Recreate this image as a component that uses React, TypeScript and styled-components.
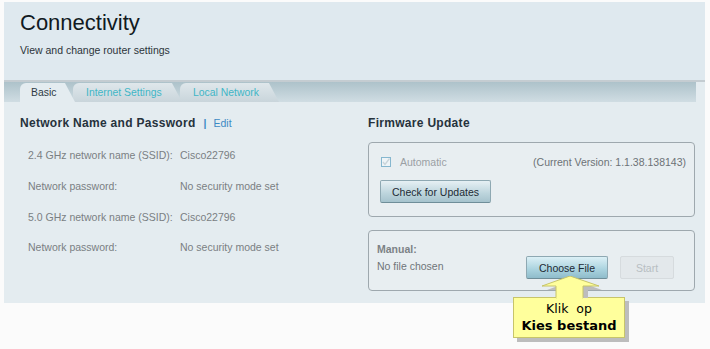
import styled, { createGlobalStyle } from "styled-components";

const GlobalStyle = createGlobalStyle`
    html, body {
        margin: 0;
        padding: 0;
        background-color: #fbfbfb;
        font-family: "Liberation Sans", Arial, sans-serif;
    }
`

const Page = styled.div`
    position: relative;
    width: 710px;
    height: 349px;
    padding: 2px 5px 0 4px;
    box-sizing: border-box;
`

const Panel = styled.div`
    width: 701px;
    background-color: #e4ecf0;
`

const Header = styled.header`
    height: 80px;
    padding: 8px 16px 0;
    box-sizing: border-box;
    background-color: #dfe9ef;
    border-bottom: 2px solid #c4ccd1;
`

const Title = styled.h1`
    margin: 0;
    font-size: 22px;
    font-weight: normal;
    line-height: 26px;
    color: #111a22;
`

const Subtitle = styled.p`
    margin: 8px 0 0;
    font-size: 10.5px;
    color: #2c343a;
`

const TabBar = styled.nav`
    display: flex;
    align-items: flex-end;
    height: 20px;
    padding-left: 16px;
    margin-right: 9px;
    background: linear-gradient(#adc2ca, #d0dde3);
`

const Tab = styled.div<{ $active?: boolean; $w: number }>`
    width: ${p => p.$w}px;
    height: 19px;
    margin-right: -2px;
    padding-left: ${p => (p.$active ? 11 : 13)}px;
    box-sizing: border-box;
    display: flex;
    align-items: center;
    font-size: 10.4px;
    color: ${p => (p.$active ? "#2e3a44" : "#3fb6c6")};
    background: ${p => (p.$active ? "#e4ecf0" : "linear-gradient(#dfe7eb, #c9d5db)")};
    border-top-left-radius: 6px;
    clip-path: polygon(0 0, calc(100% - 10px) 0, 100% 100%, 0 100%);
    position: relative;
    z-index: ${p => (p.$active ? 2 : 1)};
`

const Content = styled.section`
    display: grid;
    grid-template-columns: 348px 327px;
    padding: 14px 0 0 16px;
    height: 201px;
    box-sizing: border-box;
`

const SectionTitle = styled.h2`
    margin: 0;
    font-size: 12px;
    letter-spacing: 0.3px;
    font-weight: bold;
    color: #26323c;
    line-height: 14px;
`

const EditLink = styled.span`
    font-weight: normal;
    font-size: 10.5px;
    letter-spacing: 0;
    color: #3d8ac4;
    margin-left: 8px;

    & b {
        font-weight: bold;
        margin-right: 7px;
    }
`

const InfoList = styled.div`
    display: grid;
    grid-template-columns: 152px 1fr;
    grid-auto-rows: 30.7px;
    align-items: center;
    padding: 10px 0 0 8px;
    font-size: 10.5px;
    color: #7a7f83;
`

const Box = styled.div<{ $h: number }>`
    height: ${p => p.$h}px;
    margin-top: ${p => (p.$h > 70 ? 12 : 13)}px;
    border: 1px solid #9ea8ae;
    border-radius: 4px;
    background-color: #e8eef1;
    box-sizing: border-box;
`

const AutoRow = styled.div`
    display: flex;
    align-items: center;
    padding: 13px 8px 0 12px;
    font-size: 10.5px;
    color: #9aa0a4;
    gap: 9px;

    & span:last-child {
        margin-left: auto;
        color: #6c7276;
    }
`

const Button = styled.button<{ $variant?: "primary" | "disabled" }>`
    height: 23px;
    padding: 0;
    font-family: inherit;
    font-size: 10.5px;
    color: ${p => (p.$variant === "disabled" ? "#b7bec2" : "#1d2a34")};
    border: 1px solid ${p => (p.$variant === "disabled" ? "#d6dbde" : "#8ea8b2")};
    border-bottom-color: ${p => (p.$variant === "disabled" ? "#d6dbde" : "#6f8e99")};
    border-radius: 2px;
    background: ${p =>
        p.$variant === "primary"
            ? "linear-gradient(#dcf0f6, #a9d2de 60%, #8fbccb)"
            : p.$variant === "disabled"
            ? "#e3e8eb"
            : "linear-gradient(#e6f0f4, #bcd4dc 60%, #a6c3cd)"};
`

const CheckRow = styled.div`
    padding: 12px 0 0 11px;
`

const ManualGrid = styled.div`
    display: grid;
    grid-template-columns: 137px 82px 54px;
    column-gap: 12px;
    padding: 11px 0 0 8px;
    font-size: 10.5px;
    color: #6f7579;

    & strong {
        grid-column: 1 / -1;
        font-weight: bold;
        color: #7c8286;
        line-height: 14px;
    }

    & span {
        padding-top: 4px;
    }
`

const Callout = styled.div`
    position: absolute;
    left: 513px;
    top: 276px;
    width: 118px;
    font-family: "DejaVu Sans", Verdana, sans-serif;
`

const CalloutBox = styled.div`
    width: 112px;
    height: 41px;
    margin-top: 21px;
    box-sizing: border-box;
    background-color: #ffff9c;
    border: 1px solid #c7c46a;
    box-shadow: 4px 4px 0 #bdbdbd;
    text-align: center;
    color: #000;
    font-size: 12.5px;
    line-height: 17px;
    padding-top: 2px;

    & b {
        display: block;
        font-size: 13px;
    }
`

const ArrowSvg = styled.svg`
    position: absolute;
    left: 0;
    top: 0;
    z-index: 1;
`

function Checkbox() {
    return (
        <svg width="10" height="10" viewBox="0 0 10 10">
            <rect x="0.5" y="0.5" width="9" height="9" fill="#eef4f7" stroke="#86b7cf" />
            <path d="M2 5 L4 7.5 L8.5 1.5" fill="none" stroke="#c8d4da" strokeWidth="1.3" />
        </svg>
    )
}

function App() {
    return (
        <Page>
            <GlobalStyle />
            <Panel>
                <Header>
                    <Title>Connectivity</Title>
                    <Subtitle>View and change router settings</Subtitle>
                </Header>
                <TabBar>
                    <Tab $active $w={55}>Basic</Tab>
                    <Tab $w={109}>Internet Settings</Tab>
                    <Tab $w={99}>Local Network</Tab>
                </TabBar>
                <Content>
                    <div>
                        <SectionTitle>
                            Network Name and Password
                            <EditLink><b>|</b>Edit</EditLink>
                        </SectionTitle>
                        <InfoList>
                            <span>2.4 GHz network name (SSID):</span>
                            <span>Cisco22796</span>
                            <span>Network password:</span>
                            <span>No security mode set</span>
                            <span>5.0 GHz network name (SSID):</span>
                            <span>Cisco22796</span>
                            <span>Network password:</span>
                            <span>No security mode set</span>
                        </InfoList>
                    </div>
                    <div>
                        <SectionTitle>Firmware Update</SectionTitle>
                        <Box $h={75}>
                            <AutoRow>
                                <Checkbox />
                                <span>Automatic</span>
                                <span>(Current Version: 1.1.38.138143)</span>
                            </AutoRow>
                            <CheckRow>
                                <Button style={{ width: 111 }}>Check for Updates</Button>
                            </CheckRow>
                        </Box>
                        <Box $h={61}>
                            <ManualGrid>
                                <strong>Manual:</strong>
                                <span>No file chosen</span>
                                <Button $variant="primary">Choose File</Button>
                                <Button $variant="disabled">Start</Button>
                            </ManualGrid>
                        </Box>
                    </div>
                </Content>
            </Panel>
            <Callout>
                <ArrowSvg width="100" height="24" viewBox="0 0 100 24">
                    <polygon points="61,4 89,14 75,14 75,22 47,22 47,14 34,14" fill="#bdbdbd" />
                    <polygon points="57,0 86,10 70,10 70,22 43,22 43,10 29,10" fill="#ffff9c" stroke="#c7c46a" strokeWidth="1" />
                    <rect x="43.5" y="21" width="26" height="3" fill="#ffff9c" />
                </ArrowSvg>
                <CalloutBox>
                    Klik&nbsp;&nbsp;op
                    <b>Kies bestand</b>
                </CalloutBox>
            </Callout>
        </Page>
    )
}

export default App
